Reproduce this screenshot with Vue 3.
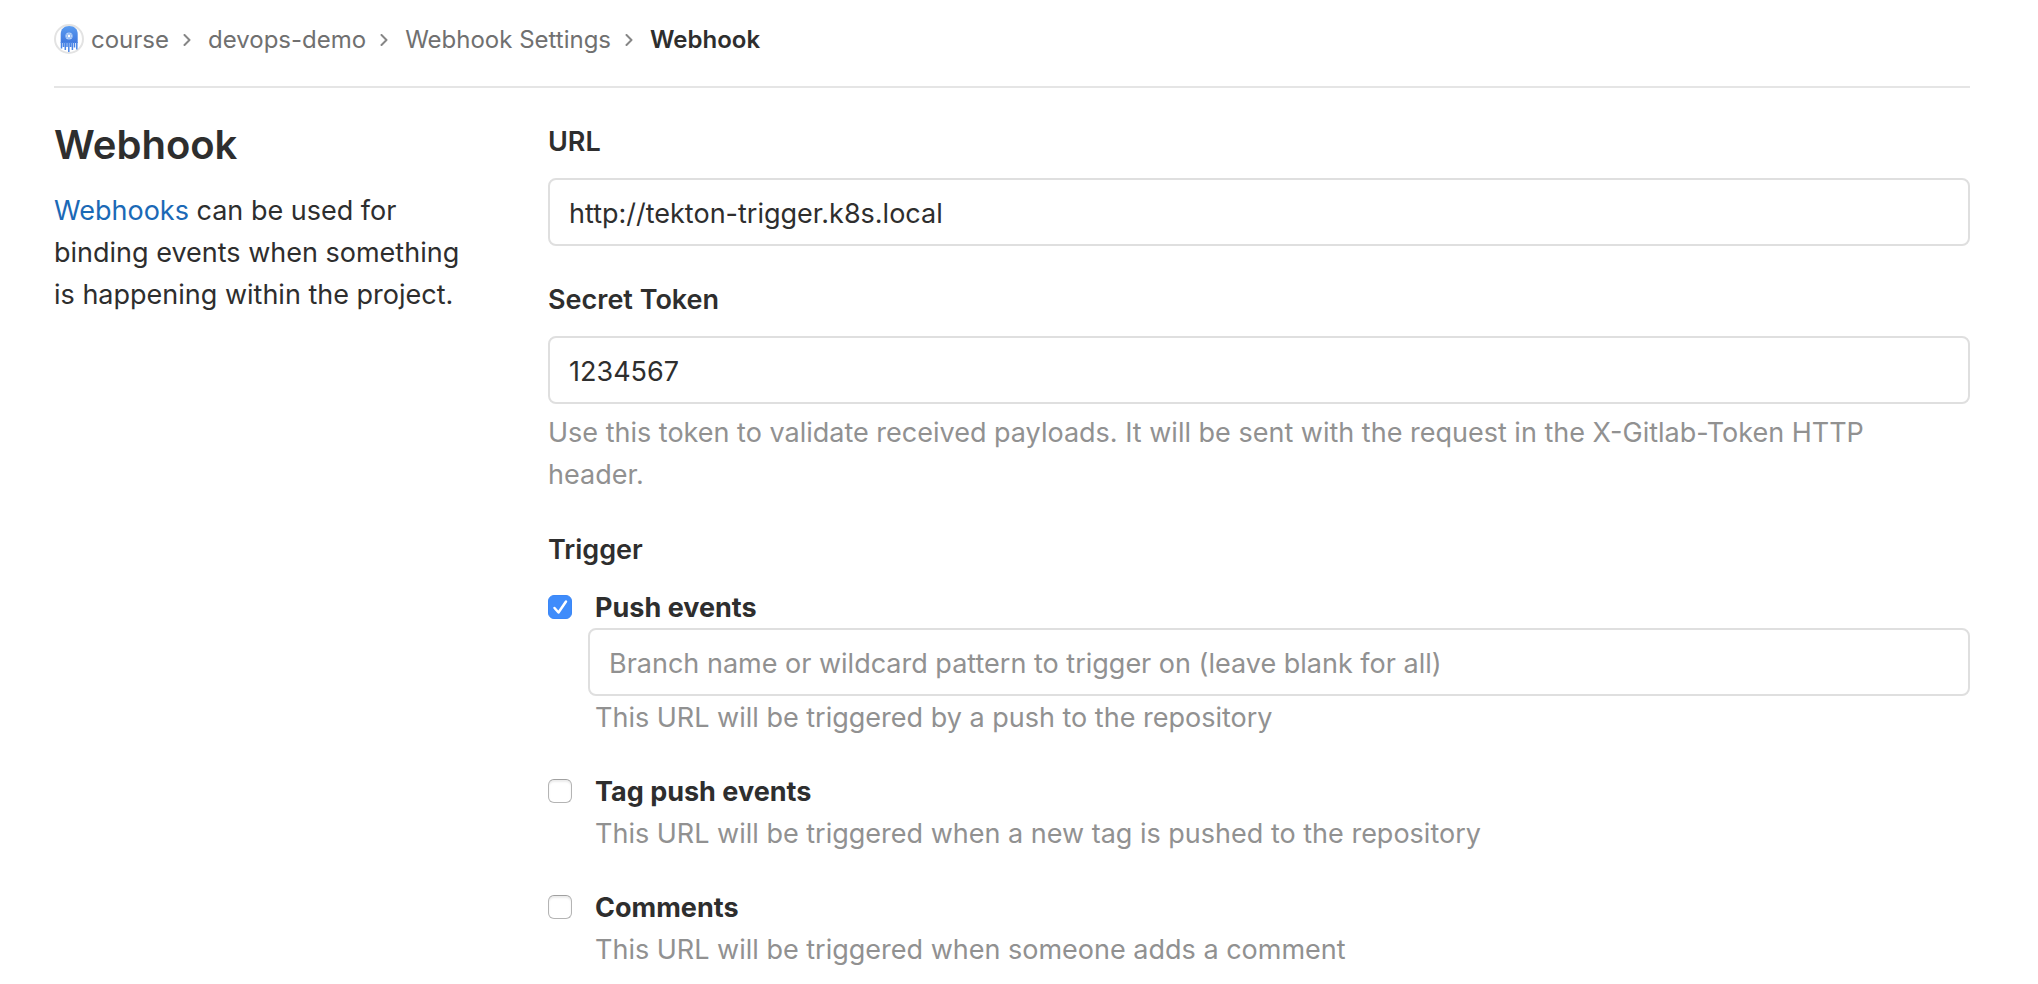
<script setup>
import { ref } from 'vue'

const crumbs = ['course', 'devops-demo', 'Webhook Settings']
const url = ref('http://tekton-trigger.k8s.local')
const token = ref('1234567')
const branch = ref('')
const triggers = ref([
  { id: 'push', label: 'Push events', text: 'This URL will be triggered by a push to the repository', checked: true, filter: true },
  { id: 'tag', label: 'Tag push events', text: 'This URL will be triggered when a new tag is pushed to the repository', checked: false },
  { id: 'comments', label: 'Comments', text: 'This URL will be triggered when someone adds a comment', checked: false },
])
</script>

<template>
  <div class="page">
    <nav class="breadcrumbs" aria-label="Breadcrumbs">
      <svg class="avatar" viewBox="0 0 30 30" aria-hidden="true">
        <defs>
          <linearGradient id="squid" x1="0" y1="0" x2="0" y2="1">
            <stop offset="0" stop-color="#5b9cf0" />
            <stop offset="1" stop-color="#3f78df" />
          </linearGradient>
        </defs>
        <circle cx="15" cy="15" r="14" fill="#fff" stroke="#e3e3e3" stroke-width="2" />
        <path d="M6.700 19V10C6.700 5 10 2 15.200 2S23.700 5 23.700 10V19Z" fill="url(#squid)" />
        <path
          d="M7.500 18V24.500M9.500 18V23M11.300 18V26M13 18V23M14.800 18V28M16.600 18V23M18.400 18V26M20.500 18V23.500M22.800 18V25.500"
          fill="none"
          stroke="#4a85e6"
          stroke-width="1.500"
        />
        <circle cx="15" cy="12" r="3.600" fill="#b9d3f8" />
        <path d="M15 9v6M12.400 10.500l5.200 3M12.400 13.500l5.200-3" stroke="#7fadf2" stroke-width="1" />
        <circle cx="15" cy="12" r="1.200" fill="#fff" />
      </svg>
      <ol class="crumbs">
        <li v-for="name in crumbs" :key="name" class="crumb">
          <a href="#">{{ name }}</a>
          <svg class="chevron" viewBox="0 0 8 12" aria-hidden="true">
            <path d="M1.500 1L6.500 6L1.500 11" fill="none" stroke="#868686" stroke-width="2" stroke-linecap="round" stroke-linejoin="round" />
          </svg>
        </li>
        <li class="crumb current" aria-current="page">Webhook</li>
      </ol>
    </nav>

    <main class="content">
      <section class="intro">
        <h1>Webhook</h1>
        <p><a href="#">Webhooks</a> can be used for binding events when something is happening within the project.</p>
      </section>

      <form class="form" @submit.prevent>
        <div class="group">
          <label class="label" for="hook-url">URL</label>
          <input id="hook-url" v-model="url" class="field" type="text" />
        </div>
        <div class="group">
          <label class="label" for="hook-token">Secret Token</label>
          <input id="hook-token" v-model="token" class="field" type="text" />
          <p class="hint">
            Use this token to validate received payloads. It will be sent with the request in the X-Gitlab-Token HTTP header.
          </p>
        </div>
        <fieldset class="triggers">
          <legend class="label">Trigger</legend>
          <div v-for="item in triggers" :key="item.id" class="trigger">
            <input :id="item.id" v-model="item.checked" class="check" type="checkbox" />
            <div class="body">
              <label class="name" :for="item.id">{{ item.label }}</label>
              <input
                v-if="item.filter"
                v-model="branch"
                class="field"
                type="text"
                aria-label="Branch filter"
                placeholder="Branch name or wildcard pattern to trigger on (leave blank for all)"
              />
              <p class="text">{{ item.text }}</p>
            </div>
          </div>
        </fieldset>
      </form>
    </main>
  </div>
</template>

<style>
body {
  background: #fff;
}
</style>

<style scoped>
.page {
  padding: 0 68px 0 54px;
  font: 400 27px/42px Inter, "Liberation Sans", sans-serif;
  color: #2e2e2e;
}

a {
  color: inherit;
  text-decoration: none;
}

.breadcrumbs {
  display: flex;
  align-items: center;
  gap: 7px;
  padding: 17px 0 25px;
  border-bottom: 2px solid #e5e5e5;
  font-size: 24px;
  color: #707070;
}

.avatar {
  flex: none;
  width: 30px;
  height: 30px;
}

.crumbs {
  display: flex;
  flex-wrap: wrap;
  margin: 0;
  padding: 2px 0 0;
  list-style: none;
}

.crumb {
  display: flex;
  align-items: center;
}

.chevron {
  width: 8px;
  height: 12px;
  margin: 0 17px 0 14px;
}

.current {
  font-weight: 600;
  color: #2e2e2e;
}

.content {
  display: grid;
  grid-template-columns: 1fr 3fr;
  gap: 20px;
  padding-top: 32px;
}

.intro {
  padding-right: 48px;
}

h1 {
  margin: 0 0 20px;
  font-size: 40px;
  font-weight: 600;
  line-height: 50px;
}

p {
  margin: 0;
}

.intro a {
  color: #1b69b6;
}

.group {
  margin-bottom: 32px;
}

.label {
  display: block;
  margin-bottom: 14px;
  padding: 0;
  font-weight: 600;
  line-height: 44px;
}

.field {
  display: block;
  box-sizing: border-box;
  width: 100%;
  height: 68px;
  padding: 2px 19px 0;
  border: 2px solid #dfdfdf;
  border-radius: 8px;
  background: #fff;
  color: #2e2e2e;
  font: inherit;
  outline: none;
}

.field::placeholder {
  color: #919191;
  opacity: 1;
}

.hint {
  padding: 8px 24px 0 0;
  color: #919191;
}

.triggers {
  margin: 0;
  padding: 0;
  border: 0;
}

.trigger {
  display: grid;
  grid-template-columns: 24px 1fr;
  gap: 16px;
  margin-bottom: 30px;
}

.check {
  appearance: none;
  width: 24px;
  height: 24px;
  margin: 9px 0 0;
  border: 1px solid #b4b4b4;
  border-top-color: #a0a0a0;
  border-radius: 6px;
  background: #fff;
  box-shadow: inset 0 2px 2px #ececec;
}

.check:checked {
  border-color: #3b87f7;
  background: #3f8cfb url("data:image/svg+xml,%3Csvg xmlns='http://www.w3.org/2000/svg' viewBox='0 0 22 22'%3E%3Cpath d='M5.500 12L9.500 16.500L17 5.500' fill='none' stroke='white' stroke-width='2.500' stroke-linecap='round' stroke-linejoin='round'/%3E%3C/svg%3E") center / 22px 22px no-repeat;
  box-shadow: none;
}

.name {
  display: block;
  padding: 2px 0 0 7px;
  font-weight: 700;
  line-height: 40px;
}

.text {
  padding-left: 7px;
  color: #919191;
  line-height: 44px;
}
</style>
